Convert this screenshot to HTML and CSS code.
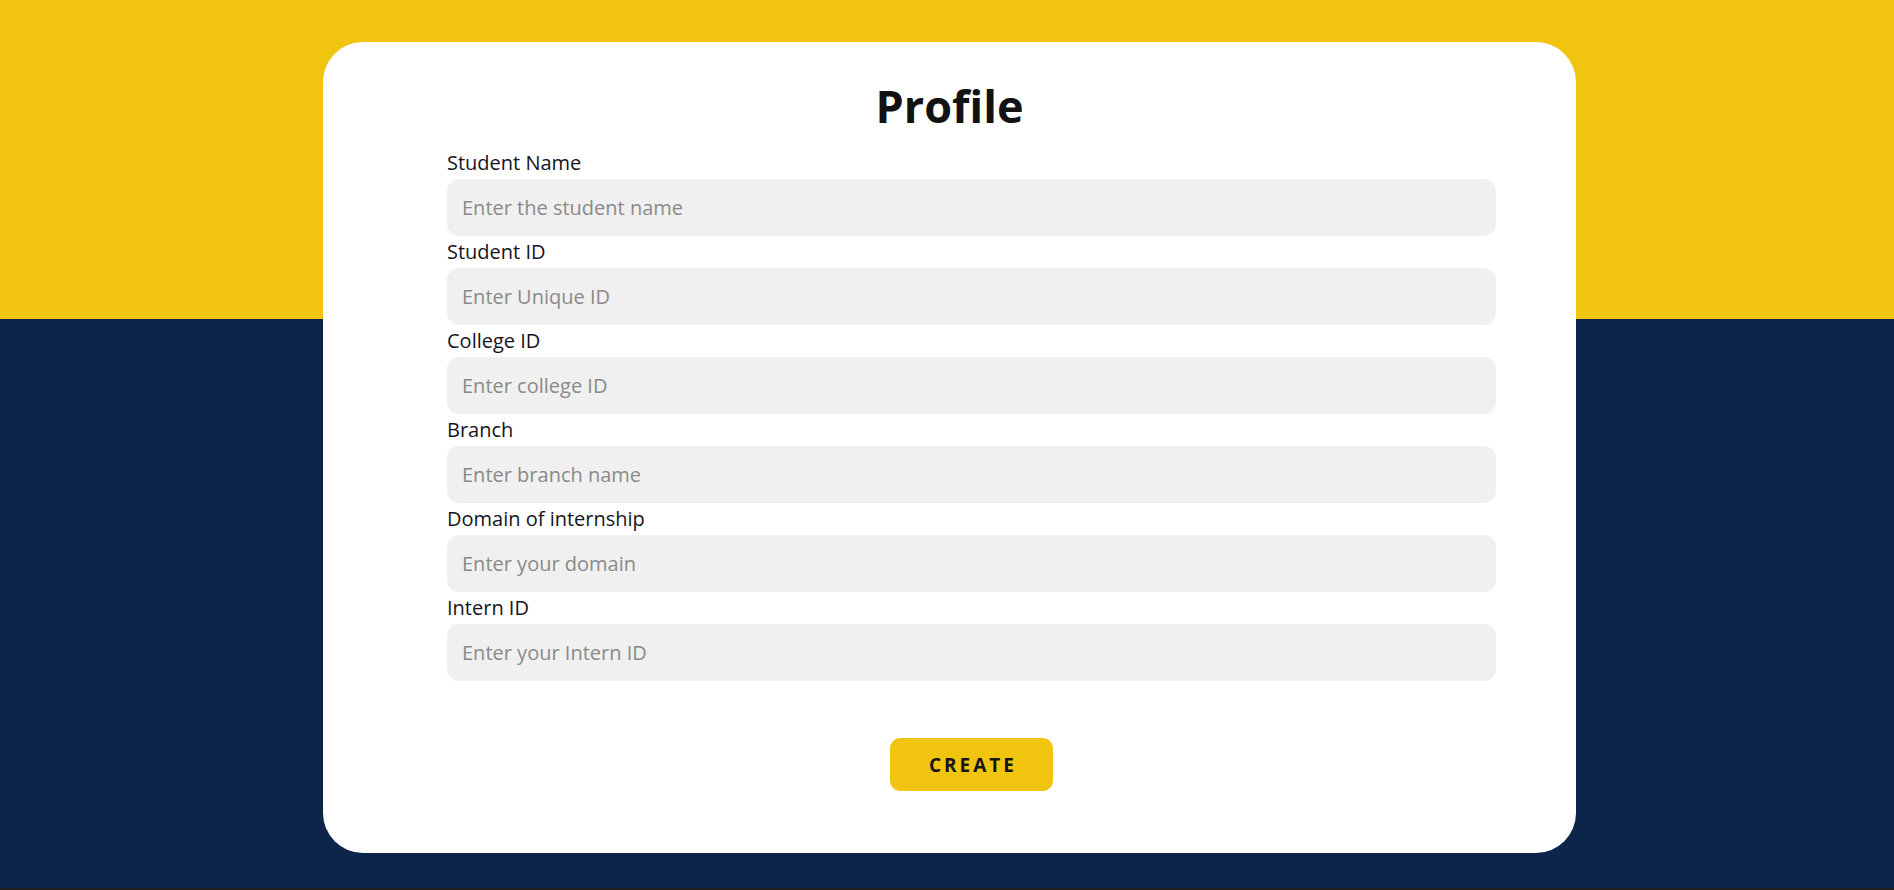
FILE: index.html
```html
<!DOCTYPE html>
<html lang="en">
<head>
<meta charset="utf-8">
<title>Profile</title>
<link rel="stylesheet" href="styles.css">
</head>
<body>
<div class="page">
  <div class="card">
    <h1 class="title">Profile</h1>
    <form class="form">
      <label class="field">
        <span class="label">Student Name</span>
        <input class="input" type="text" placeholder="Enter the student name">
      </label>
      <label class="field">
        <span class="label">Student ID</span>
        <input class="input" type="text" placeholder="Enter Unique ID">
      </label>
      <label class="field">
        <span class="label">College ID</span>
        <input class="input" type="text" placeholder="Enter college ID">
      </label>
      <label class="field">
        <span class="label">Branch</span>
        <input class="input" type="text" placeholder="Enter branch name">
      </label>
      <label class="field">
        <span class="label">Domain of internship</span>
        <input class="input" type="text" placeholder="Enter your domain">
      </label>
      <label class="field">
        <span class="label">Intern ID</span>
        <input class="input" type="text" placeholder="Enter your Intern ID">
      </label>
      <div class="actions">
        <button class="btn" type="button">CREATE</button>
      </div>
    </form>
  </div>
</div>
</body>
</html>
```

FILE: styles.css
```css
* { box-sizing: border-box; }
html { background: #1f1f1f; }
body {
  margin: 0;
  font-family: "Open Sans", "Noto Sans", sans-serif;
}
.page {
  height: 888px;
  background: linear-gradient(to bottom, #f1c40f 0, #f1c40f 319px, #0d244b 319px, #0d244b 100%);
  padding-top: 42px;
  overflow: hidden;
}
.card {
  margin-left: 323px;
  width: 1253px;
  height: 811px;
  background: #ffffff;
  border-radius: 40px;
  padding: 33px 80px 0 124px;
}
.title {
  margin: 0 -80px 0 -124px;
  font-size: 45px;
  line-height: 61px;
  font-weight: 700;
  color: #121212;
  text-align: center;
}
.form {
  margin-top: 13px;
  display: flex;
  flex-direction: column;
}
.field {
  display: flex;
  flex-direction: column;
  margin-bottom: 2px;
}
.label {
  font-size: 20px;
  line-height: 27px;
  color: #16141c;
  margin-bottom: 3px;
}
.input {
  height: 57px;
  border: none;
  outline: none;
  border-radius: 12px;
  background: #f0f0f0;
  padding: 0 15px;
  font-family: "Open Sans", "Noto Sans", sans-serif;
  font-size: 20px;
  color: #222;
}
.input::placeholder {
  color: #8a8a8a;
}
.actions {
  display: flex;
  justify-content: center;
  margin-top: 55px;
}
.btn {
  width: 163px;
  height: 53px;
  border: none;
  border-radius: 10px;
  background: #f1c40f;
  font-family: "Open Sans", "Noto Sans", sans-serif;
  font-weight: 700;
  font-size: 19px;
  letter-spacing: 3px;
  padding: 0 0 0 3px;
  color: #161616;
  cursor: pointer;
}
```
